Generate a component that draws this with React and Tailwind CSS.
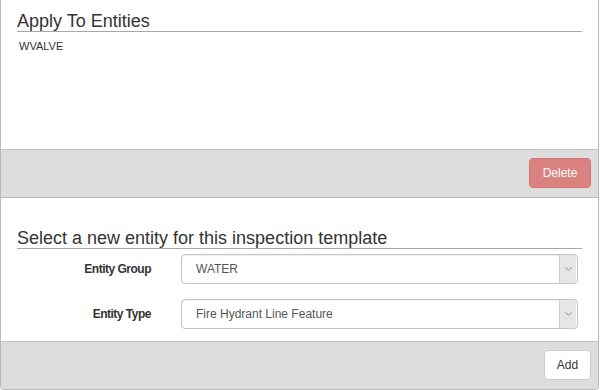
import React from "react";

const SelectBox = ({ value }) => {
  return (
    <div className="flex-1 h-[30px] flex items-center border border-[#c4c4c4] rounded-[4px] bg-white shadow-[inset_0_1px_1px_rgba(0,0,0,0.075)]">
      <div className="flex-1 pl-[14px] text-[12px] text-[#555]">{value}</div>
      {/* dropdown arrow */}
      <div className="w-[17px] h-[28px] mr-[1px] flex items-center justify-center bg-[#e6e6e6] border-l border-[#cfcfcf] rounded-r-[3px]">
        <svg width="7" height="4" viewBox="0 0 7 4">
          <path d="M0.5 0.5 L3.5 3.3 L6.5 0.5" fill="none" stroke="#8a8a8a" strokeWidth="1" />
        </svg>
      </div>
    </div>
  );
};

const FormRow = ({ label, value }) => {
  return (
    <div className="flex items-center">
      <div className="w-[135px] pr-[1px] text-right text-[12px] font-bold tracking-[-0.5px] text-[#333]">{label}</div>
      <div className="w-[29px]"></div>
      <SelectBox value={value} />
    </div>
  );
};

export default function App() {
  return (
    <div className="w-[600px] h-[390px] bg-white overflow-hidden" style={{ fontFamily: '"Liberation Sans", Arial, sans-serif' }}>
      {/* applied entities panel */}
      <div className="w-[599px] border-l border-r border-b border-[#b8b8b8]">
        <div className="h-[149px] px-4 pt-[12px]">
          <div className="text-[18px] leading-[19px] text-[#333] border-b border-[#a8a8a8]">Apply To Entities</div>
          <div className="mt-[6px] ml-[2px] text-[11px] leading-[17px] text-[#333]">WVALVE</div>
        </div>
        <div className="h-[48px] border-t border-[#c4c4c4] bg-[#dddddd] flex justify-end pt-[8px] pr-[7px]">
          <button className="h-[30px] w-[62px] rounded-[4px] bg-[#d9827f] border border-[#d27672] text-white text-[12px]">
            Delete
          </button>
        </div>
      </div>

      {/* new entity panel */}
      <div className="w-[599px] border-l border-r border-b border-[#b8b8b8] rounded-b-[4px]">
        <div className="h-[143px] px-4 pt-[31px]">
          <div className="text-[18px] leading-[19px] text-[#333] border-b border-[#a8a8a8]">
            Select a new entity for this inspection template
          </div>
          <div className="mt-[5px] flex flex-col gap-[15px] pr-[4px]">
            <FormRow label="Entity Group" value="WATER" />
            <FormRow label="Entity Type" value="Fire Hydrant Line Feature" />
          </div>
        </div>
        <div className="h-[48px] border-t border-[#c4c4c4] bg-[#dddddd] rounded-b-[4px] flex justify-end pt-[8px] pr-[7px]">
          <button className="h-[30px] w-[47px] rounded-[4px] bg-white border border-[#cccccc] text-[#333] text-[12px]">
            Add
          </button>
        </div>
      </div>
    </div>
  );
}
